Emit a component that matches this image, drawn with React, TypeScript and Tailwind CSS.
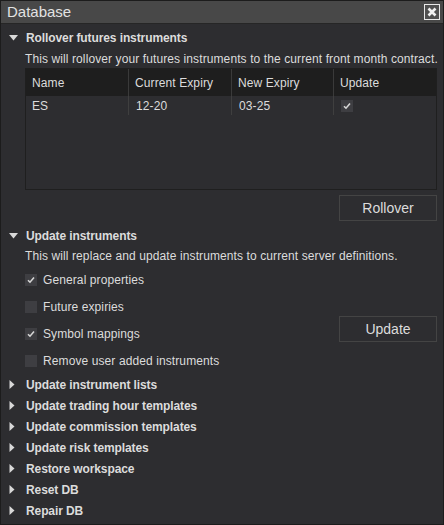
import React from "react";

const font = { fontFamily: '"Liberation Sans", Arial, sans-serif' };

function TriDown() {
  return (
    <svg width="9" height="6" viewBox="0 0 9 6" className="shrink-0">
      <path d="M0 0 L9 0 L4.5 5.5 Z" fill="#d8d8d8" />
    </svg>
  );
}
function TriRight() {
  return (
    <svg width="6" height="9" viewBox="0 0 6 9" className="shrink-0">
      <path d="M0.5 0 L5.5 4.5 L0.5 9 Z" fill="#d8d8d8" />
    </svg>
  );
}

function Check({ checked }: { checked: boolean }) {
  return (
    <div className="w-[12px] h-[12px] bg-[#3e3e42] flex items-center justify-center shrink-0">
      {checked && (
        <svg width="8" height="8" viewBox="0 0 8 8">
          <path d="M1 4.2 L3 6.2 L7 1.6" stroke="#d6d6d6" strokeWidth="1.6" fill="none" />
        </svg>
      )}
    </div>
  );
}

function Section({ title, open }: { title: string; open?: boolean }) {
  return (
    <div className="flex items-center h-[21px]">
      <div className="w-[25px] flex items-center pl-[8px]">{open ? <TriDown /> : <TriRight />}</div>
      <span className="font-bold text-[12px] tracking-[-0.1px] text-[#dcdcdc]">{title}</span>
    </div>
  );
}

export default function App() {
  const cb = [
    { label: "General properties", c: true, h: "h-[26px]" },
    { label: "Future expiries", c: false, h: "h-[27px]" },
    { label: "Symbol mappings", c: true, h: "h-[27px]" },
    { label: "Remove user added instruments", c: false, h: "h-[27px]" },
  ];
  return (
    <div style={font} className="w-[444px] h-[525px] bg-[#2d2d30] border border-[#1c1c1c] flex flex-col text-[#dcdcdc] overflow-hidden">
      <div className="h-[23px] bg-[#484848] flex items-center justify-between pl-[6px] pr-[3px] border-b border-[#262626] shrink-0">
        <span className="text-[15px] text-[#e2e2e2]">Database</span>
        <div className="w-[16px] h-[16px] border border-[#e8e8e8] flex items-center justify-center bg-[#4f4f4f]">
          <svg width="10" height="10" viewBox="0 0 10 10">
            <path d="M1.5 1.5 L8.5 8.5 M8.5 1.5 L1.5 8.5" stroke="#f0f0f0" strokeWidth="2.6" />
          </svg>
        </div>
      </div>

      <div className="flex flex-col pt-[3px]">
        <Section title="Rollover futures instruments" open />
        <div className="pl-[24px] text-[12px] tracking-[0.1px] h-[20px] flex items-center pt-[1px]">
          This will rollover your futures instruments to the current front month contract.
        </div>
        <div className="ml-[24px] mr-[6px] h-[122px] border border-[#1f1f1f] text-[12px] tracking-[0.1px] flex flex-col">
          <div className="grid grid-cols-[103px_103px_102px_1fr] h-[27px] bg-[#1e1e1e]">
            <div className="flex items-center pl-[6px] border-r border-[#3a3a3a]">Name</div>
            <div className="flex items-center pl-[6px] border-r border-[#3a3a3a]">Current Expiry</div>
            <div className="flex items-center pl-[6px] border-r border-[#3a3a3a]">New Expiry</div>
            <div className="flex items-center pl-[6px]">Update</div>
          </div>
          <div className="grid grid-cols-[103px_103px_102px_1fr] h-[19px]">
            <div className="flex items-center pl-[6px] border-r border-[#3f3f3f]">ES</div>
            <div className="flex items-center pl-[7px] border-r border-[#3f3f3f]">12-20</div>
            <div className="flex items-center pl-[7px] border-r border-[#3f3f3f]">03-25</div>
            <div className="flex items-center pl-[7px]"><Check checked /></div>
          </div>
        </div>
        <div className="flex justify-end pr-[6px] mt-[5px]">
          <button className="w-[98px] h-[26px] border border-[#444] bg-[#2d2d30] text-[14px] text-[#dcdcdc]">Rollover</button>
        </div>

        <div className="mt-[4px]"><Section title="Update instruments" open /></div>
        <div className="pl-[24px] text-[12px] tracking-[0.1px] h-[20px] flex items-center">
          This will replace and update instruments to current server definitions.
        </div>
        <div className="flex items-start pr-[6px]">
          <div className="flex-1 flex flex-col pl-[24px] pt-[1px]">
            {cb.map((x) => (
              <div key={x.label} className={`flex items-center gap-[6px] ${x.h} text-[12px] tracking-[0.1px]`}>
                <Check checked={x.c} />
                <span>{x.label}</span>
              </div>
            ))}
          </div>
          <button className="w-[98px] h-[26px] border border-[#444] bg-[#2d2d30] text-[14px] text-[#dcdcdc] mt-[50px]">Update</button>
        </div>

        <div className="flex flex-col">
          <Section title="Update instrument lists" />
          <Section title="Update trading hour templates" />
          <Section title="Update commission templates" />
          <Section title="Update risk templates" />
          <Section title="Restore workspace" />
          <Section title="Reset DB" />
          <Section title="Repair DB" />
        </div>
      </div>
    </div>
  );
}
